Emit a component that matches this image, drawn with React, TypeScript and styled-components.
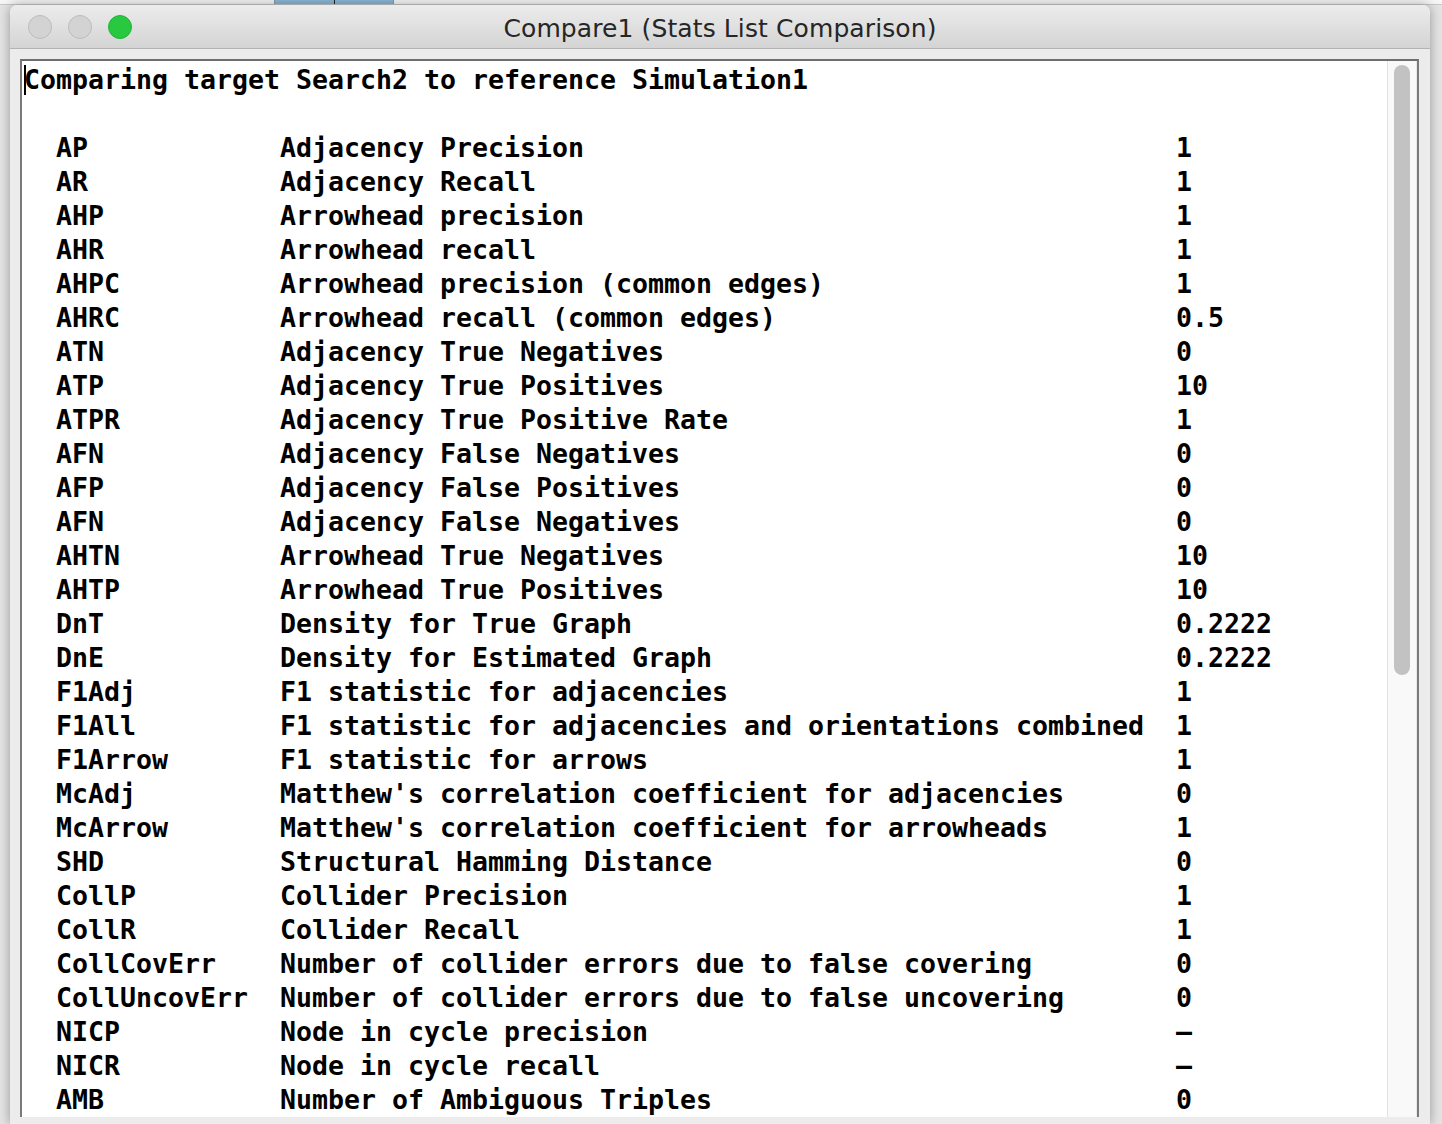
import * as React from "react";
import styled, { createGlobalStyle } from "styled-components";

const GlobalStyle = createGlobalStyle`
	html, body {
		margin: 0;
		padding: 0;
		height: 100%;
		overflow: hidden;
		background: #e6e6e6;
	}
	#root {
		height: 100%;
	}
`;

const stats: [string, string, string][] = [
	["AP", "Adjacency Precision", "1"],
	["AR", "Adjacency Recall", "1"],
	["AHP", "Arrowhead precision", "1"],
	["AHR", "Arrowhead recall", "1"],
	["AHPC", "Arrowhead precision (common edges)", "1"],
	["AHRC", "Arrowhead recall (common edges)", "0.5"],
	["ATN", "Adjacency True Negatives", "0"],
	["ATP", "Adjacency True Positives", "10"],
	["ATPR", "Adjacency True Positive Rate", "1"],
	["AFN", "Adjacency False Negatives", "0"],
	["AFP", "Adjacency False Positives", "0"],
	["AFN", "Adjacency False Negatives", "0"],
	["AHTN", "Arrowhead True Negatives", "10"],
	["AHTP", "Arrowhead True Positives", "10"],
	["DnT", "Density for True Graph", "0.2222"],
	["DnE", "Density for Estimated Graph", "0.2222"],
	["F1Adj", "F1 statistic for adjacencies", "1"],
	["F1All", "F1 statistic for adjacencies and orientations combined", "1"],
	["F1Arrow", "F1 statistic for arrows", "1"],
	["McAdj", "Matthew's correlation coefficient for adjacencies", "0"],
	["McArrow", "Matthew's correlation coefficient for arrowheads", "1"],
	["SHD", "Structural Hamming Distance", "0"],
	["CollP", "Collider Precision", "1"],
	["CollR", "Collider Recall", "1"],
	["CollCovErr", "Number of collider errors due to false covering", "0"],
	["CollUncovErr", "Number of collider errors due to false uncovering", "0"],
	["NICP", "Node in cycle precision", "–"],
	["NICR", "Node in cycle recall", "–"],
	["AMB", "Number of Ambiguous Triples", "0"],
];

const StyledDesktop = styled.div`
	display: flex;
	flex-direction: column;
	height: 100%;
	background: #e4e4e4;
`;

const StyledMenuStrip = styled.div`
	display: flex;
	height: 4px;
	padding-left: 274px;
	background: #f6f6f6;
	border-bottom: 1px solid #c9c9c9;
`;

const StyledStripTab = styled.div`
	width: 118px;
	background: #8bb8d9;
	border-left: 1px solid #8c9aa6;
	border-right: 1px solid #8c9aa6;
	display: flex;
	justify-content: center;
	align-items: flex-start;
`;

const StyledStripMark = styled.div`
	width: 1px;
	height: 4px;
	background: #222;
`;

const StyledWindow = styled.div`
	flex: 1;
	display: flex;
	flex-direction: column;
	margin: 0 12px 0 10px;
	border-radius: 7px 7px 0 0;
	background: #ececec;
	box-shadow: 0 0 12px rgba(0, 0, 0, 0.35);
	overflow: hidden;
`;

const StyledTitleBar = styled.div`
	position: relative;
	height: 44px;
	display: flex;
	align-items: center;
	justify-content: center;
	padding-top: 3px;
	box-sizing: border-box;
	background: linear-gradient(#ececec, #d4d4d4);
	border-bottom: 1px solid #b3b3b3;
	font-family: "DejaVu Sans", "Liberation Sans", sans-serif;
	font-size: 25px;
	letter-spacing: 0.1px;
	color: #262626;
`;

const StyledLights = styled.div`
	position: absolute;
	left: 18px;
	top: 10px;
	display: flex;
	gap: 16px;
`;

const StyledLight = styled.div<{ $color: string; $border: string }>`
	width: 22px;
	height: 22px;
	border-radius: 50%;
	background: ${(p) => p.$color};
	border: 1px solid ${(p) => p.$border};
`;

const StyledBody = styled.div`
	flex: 1;
	display: flex;
	padding: 10px 11px 7px 10px;
	min-height: 0;
`;

const StyledTextPane = styled.div`
	flex: 1;
	display: flex;
	border-top: 2px solid #6e6e6e;
	border-left: 2px solid #7a7a7a;
	border-right: 2px solid #7a7a7a;
	background: #fff;
	min-height: 0;
	overflow: hidden;
`;

const StyledText = styled.div`
	flex: 1;
	padding: 2px 0 0 2px;
	font-family: "DejaVu Sans Mono", "Liberation Mono", monospace;
	font-weight: bold;
	font-size: 26.58px;
	line-height: 34px;
	color: #000;
	white-space: pre;
`;

const StyledHeading = styled.div`
	display: flex;
	align-items: center;
	margin-bottom: 34px;
`;

const StyledCaret = styled.span`
	display: inline-block;
	width: 2px;
	height: 30px;
	margin-right: -2px;
	background: #000;
`;

const StyledRow = styled.div`
	display: grid;
	grid-template-columns: 14ch 56ch auto;
	padding-left: 2ch;
`;

const StyledScrollTrack = styled.div`
	width: 28px;
	display: flex;
	justify-content: center;
	padding-top: 4px;
	background: #f9f9f9;
	border-left: 1px solid #e3e3e3;
	border-right: 1px solid #e8e8e8;
`;

const StyledThumb = styled.div`
	width: 16px;
	height: 610px;
	border-radius: 8px;
	background: #c2c2c2;
`;

const App: React.FC = () => {
	return (
		<StyledDesktop>
			<GlobalStyle />
			<StyledMenuStrip>
				<StyledStripTab>
					<StyledStripMark />
				</StyledStripTab>
			</StyledMenuStrip>
			<StyledWindow>
				<StyledTitleBar>
					<StyledLights>
						<StyledLight $color="#d3d3d3" $border="#bcbcbc" />
						<StyledLight $color="#d3d3d3" $border="#bcbcbc" />
						<StyledLight $color="#28c840" $border="#22b33a" />
					</StyledLights>
					Compare1 (Stats List Comparison)
				</StyledTitleBar>
				<StyledBody>
					<StyledTextPane>
						<StyledText>
							<StyledHeading>
								<StyledCaret />
								Comparing target Search2 to reference Simulation1
							</StyledHeading>
							{stats.map(([abbr, name, value], i) => (
								<StyledRow key={i}>
									<span>{abbr}</span>
									<span>{name}</span>
									<span>{value}</span>
								</StyledRow>
							))}
						</StyledText>
						<StyledScrollTrack>
							<StyledThumb />
						</StyledScrollTrack>
					</StyledTextPane>
				</StyledBody>
			</StyledWindow>
		</StyledDesktop>
	);
};

export default App;
